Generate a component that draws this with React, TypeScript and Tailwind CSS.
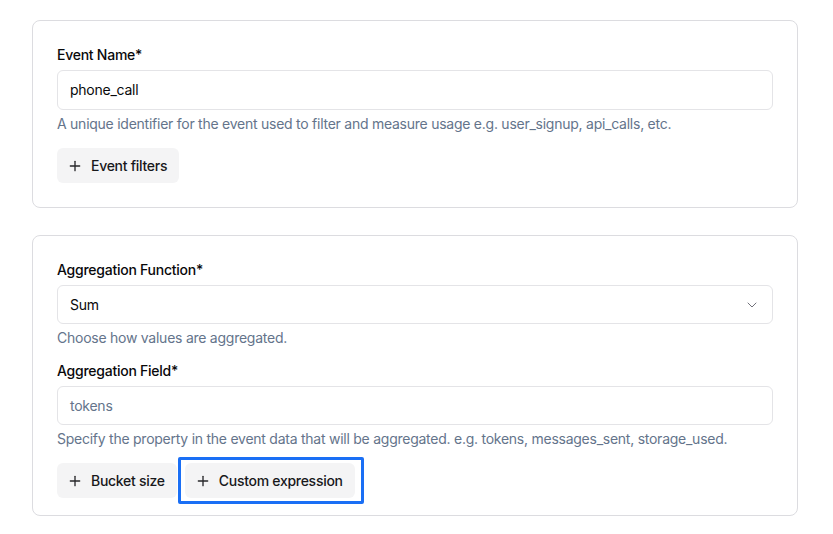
import React from "react";

function PlusIcon() {
  return (
    <svg width="16" height="16" viewBox="0 0 24 24" fill="none" stroke="currentColor" strokeWidth="2" strokeLinecap="round" strokeLinejoin="round">
      <path d="M5 12h14" />
      <path d="M12 5v14" />
    </svg>
  );
}

function ChevronDown() {
  return (
    <svg width="16" height="16" viewBox="0 0 24 24" fill="none" stroke="currentColor" strokeWidth="1.5" strokeLinecap="round" strokeLinejoin="round">
      <path d="m6 9 6 6 6-6" />
    </svg>
  );
}

function AddButton({ label, highlight }: { label: string; highlight?: boolean }) {
  return (
    <div className="relative">
      <button className="flex h-[35px] items-center gap-2 rounded-md bg-[#f4f4f5] pl-[10px] pr-[12px] text-sm font-medium tracking-[-0.02em] text-[#18181b]">
        <span className="text-[#27272a]">
          <PlusIcon />
        </span>
        {label}
      </button>
      {highlight && (
        <div className="pointer-events-none absolute -bottom-[6px] -left-[7px] -right-[9px] -top-[6px] rounded-[2px] border-[3px] border-[#1a6ff5]" />
      )}
    </div>
  );
}

function Label({ children }: { children: React.ReactNode }) {
  return <div className="text-sm font-medium leading-5 tracking-[-0.018em] text-[#09090b]">{children}</div>;
}

function Helper({ children }: { children: React.ReactNode }) {
  return <div className="mt-[4px] text-sm leading-5 tracking-[-0.018em] text-[#64748b]">{children}</div>;
}

export default function App() {
  return (
    <div className="min-h-[534px] w-[833px] bg-white px-8 pt-5" style={{ fontFamily: "Inter, 'Noto Sans', sans-serif" }}>
      <div className="flex w-[766px] flex-col gap-[27px]">
        <div className="rounded-lg border border-[#dcdce0] px-6 pb-6 pt-6">
          <Label>Event Name*</Label>
          <div className="mt-[5px] flex h-[40px] items-center rounded-md border border-[#e4e4e7] px-3 text-sm tracking-[-0.018em] text-[#09090b]">
            phone_call
          </div>
          <Helper>A unique identifier for the event used to filter and measure usage e.g. user_signup, api_calls, etc.</Helper>
          <div className="mt-[14px] flex">
            <AddButton label="Event filters" />
          </div>
        </div>

        <div className="rounded-lg border border-[#dcdce0] px-6 pb-[17px] pt-6">
          <Label>Aggregation Function*</Label>
          <div className="mt-[5px] flex h-[39px] items-center justify-between rounded-md border border-[#e4e4e7] pl-3 pr-[12px] text-sm tracking-[-0.018em] text-[#09090b]">
            <span>Sum</span>
            <span className="text-[#71717a]">
              <ChevronDown />
            </span>
          </div>
          <Helper>Choose how values are aggregated.</Helper>
          <div className="mt-[13px]">
            <Label>Aggregation Field*</Label>
          </div>
          <div className="mt-[5px] flex h-[39px] items-center rounded-md border border-[#e4e4e7] px-3 text-sm tracking-[-0.018em] text-[#64748b]">
            tokens
          </div>
          <Helper>Specify the property in the event data that will be aggregated. e.g. tokens, messages_sent, storage_used.</Helper>
          <div className="mt-[14px] flex gap-[8px]">
            <AddButton label="Bucket size" />
            <AddButton label="Custom expression" highlight />
          </div>
        </div>
      </div>
    </div>
  );
}
